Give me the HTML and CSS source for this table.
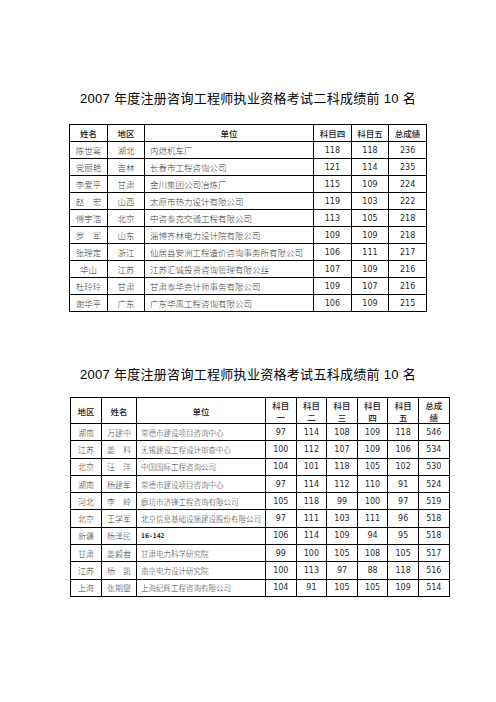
FILE: index.html
```html
<!DOCTYPE html>
<html lang="zh">
<head>
<meta charset="utf-8">
<title>2007 年度注册咨询工程师执业资格考试成绩</title>
<link rel="stylesheet" href="styles.css">
</head>
<body>
<div class="page">
  <h1 class="title">2007 年度注册咨询工程师执业资格考试二科成绩前 10 名</h1>
  <table class="grid t1">
    <colgroup>
      <col class="c-name"><col class="c-area"><col class="c-unit"><col class="c-s"><col class="c-s"><col class="c-s">
    </colgroup>
    <thead>
      <tr><th>姓名</th><th>地区</th><th>单位</th><th>科目四</th><th>科目五</th><th>总成绩</th></tr>
    </thead>
    <tbody>
      <tr><td class="cn">陈世宴</td><td class="cn">湖北</td><td class="unit">内燃机车厂</td><td class="num">118</td><td class="num">118</td><td class="num">236</td></tr>
      <tr><td class="cn">党丽艳</td><td class="cn">吉林</td><td class="unit">长春市工程咨询公司</td><td class="num">121</td><td class="num">114</td><td class="num">235</td></tr>
      <tr><td class="cn">李爱平</td><td class="cn">甘肃</td><td class="unit">金川集团公司冶炼厂</td><td class="num">115</td><td class="num">109</td><td class="num">224</td></tr>
      <tr><td class="cn">赵　宏</td><td class="cn">山西</td><td class="unit">太原市热力设计有限公司</td><td class="num">119</td><td class="num">103</td><td class="num">222</td></tr>
      <tr><td class="cn">傅宇浩</td><td class="cn">北京</td><td class="unit">中咨泰克交通工程有限公司</td><td class="num">113</td><td class="num">105</td><td class="num">218</td></tr>
      <tr><td class="cn">罗　军</td><td class="cn">山东</td><td class="unit">淄博齐林电力设计院有限公司</td><td class="num">109</td><td class="num">109</td><td class="num">218</td></tr>
      <tr><td class="cn">张理定</td><td class="cn">浙江</td><td class="unit">仙居县安洲工程造价咨询事务所有限公司</td><td class="num">106</td><td class="num">111</td><td class="num">217</td></tr>
      <tr><td class="cn">华山</td><td class="cn">江苏</td><td class="unit">江苏汇诚投资咨询管理有限公丝</td><td class="num">107</td><td class="num">109</td><td class="num">216</td></tr>
      <tr><td class="cn">杜玲玲</td><td class="cn">甘肃</td><td class="unit">甘肃泰华会计师事务有限公司</td><td class="num">109</td><td class="num">107</td><td class="num">216</td></tr>
      <tr><td class="cn">谢华平</td><td class="cn">广东</td><td class="unit">广东华禹工程咨询有限公司</td><td class="num">106</td><td class="num">109</td><td class="num">215</td></tr>
    </tbody>
  </table>

  <h1 class="title title2">2007 年度注册咨询工程师执业资格考试五科成绩前 10 名</h1>
  <table class="grid t2">
    <colgroup>
      <col class="d-area"><col class="d-name"><col class="d-unit">
      <col class="d-s"><col class="d-s"><col class="d-s"><col class="d-s"><col class="d-s"><col class="d-s">
    </colgroup>
    <thead>
      <tr><th>地区</th><th>姓名</th><th>单位</th><th>科目<br>一</th><th>科目<br>二</th><th>科目<br>三</th><th>科目<br>四</th><th>科目<br>五</th><th>总成<br>绩</th></tr>
    </thead>
    <tbody>
      <tr><td class="cn">湖南</td><td class="cn">万建中</td><td class="unit">常德市建设项目咨询中心</td><td class="num">97</td><td class="num">114</td><td class="num">108</td><td class="num">109</td><td class="num">118</td><td class="num">546</td></tr>
      <tr><td class="cn">江苏</td><td class="cn">姜　科</td><td class="unit">无锡建设工程设计审查中心</td><td class="num">100</td><td class="num">112</td><td class="num">107</td><td class="num">109</td><td class="num">106</td><td class="num">534</td></tr>
      <tr><td class="cn">北京</td><td class="cn">汪　洋</td><td class="unit">中国国际工程咨询公司</td><td class="num">104</td><td class="num">101</td><td class="num">118</td><td class="num">105</td><td class="num">102</td><td class="num">530</td></tr>
      <tr><td class="cn">湖南</td><td class="cn">杨建军</td><td class="unit">常德市建设项目咨询中心</td><td class="num">97</td><td class="num">114</td><td class="num">112</td><td class="num">110</td><td class="num">91</td><td class="num">524</td></tr>
      <tr><td class="cn">河北</td><td class="cn">李　岭</td><td class="unit">廊坊市济锋工程咨询有限公司</td><td class="num">105</td><td class="num">118</td><td class="num">99</td><td class="num">100</td><td class="num">97</td><td class="num">519</td></tr>
      <tr><td class="cn">北京</td><td class="cn">王学军</td><td class="unit">北京信息基础设施建设股份有限公司</td><td class="num">97</td><td class="num">111</td><td class="num">103</td><td class="num">111</td><td class="num">96</td><td class="num">518</td></tr>
      <tr><td class="cn">新疆</td><td class="cn">杨泽民</td><td class="unit code">16-142</td><td class="num">106</td><td class="num">114</td><td class="num">109</td><td class="num">94</td><td class="num">95</td><td class="num">518</td></tr>
      <tr><td class="cn">甘肃</td><td class="cn">姜毅君</td><td class="unit">甘肃电力科学研究院</td><td class="num">99</td><td class="num">100</td><td class="num">105</td><td class="num">108</td><td class="num">105</td><td class="num">517</td></tr>
      <tr><td class="cn">江苏</td><td class="cn">杨　凯</td><td class="unit">南京电力设计研究院</td><td class="num">100</td><td class="num">113</td><td class="num">97</td><td class="num">88</td><td class="num">118</td><td class="num">516</td></tr>
      <tr><td class="cn">上海</td><td class="cn">张期燮</td><td class="unit">上海纪辉工程咨询有限公司</td><td class="num">104</td><td class="num">91</td><td class="num">105</td><td class="num">105</td><td class="num">109</td><td class="num">514</td></tr>
    </tbody>
  </table>
</div>
</body>
</html>
```

FILE: styles.css
```css
html, body {
  margin: 0;
  padding: 0;
  background: #ffffff;
}

body {
  font-family: "Liberation Sans", "Noto Sans CJK SC", sans-serif;
  color: #111;
}

.page {
  width: 496px;
  padding-top: 89px;
}

.title {
  margin: 0;
  font-size: 13px;
  font-weight: normal;
  letter-spacing: 0.3px;
  line-height: 20px;
  text-align: center;
  color: #000;
}

.title2 {
  margin-top: 53px;
}

.grid {
  border-collapse: collapse;
  table-layout: fixed;
}

.grid th,
.grid td {
  border: 1px solid #000;
  padding: 0;
  vertical-align: middle;
  white-space: nowrap;
  overflow: hidden;
}

.grid th {
  font-family: "Noto Sans CJK SC", sans-serif;
  font-weight: 500;
  font-size: 8.5px;
  color: #222;
  text-align: center;
}

.grid td.cn {
  font-family: "Noto Sans CJK SC", sans-serif;
  font-weight: 300;
  font-size: 8.5px;
  color: #3a3a3a;
  text-align: center;
}

.grid td.unit {
  font-family: "Noto Sans CJK SC", sans-serif;
  font-weight: 300;
  font-size: 8.5px;
  color: #3a3a3a;
  text-align: left;
  padding-left: 5px;
}

.grid td.num {
  font-family: "DejaVu Sans", sans-serif;
  font-size: 8px;
  color: #2a2a2a;
  text-align: center;
}

/* table 1 */
.t1 {
  width: 357px;
  margin: 15px auto 0;
}

.t1 tr {
  height: 17px;
}

.c-name { width: 38px; }
.c-area { width: 37px; }
.c-unit { width: 169px; }
.c-s { width: 37.6px; }

/* table 2 */
.t2 {
  width: 379px;
  margin: 12px 0 0 70px;
}

.t2 thead tr {
  height: 26px;
}

.t2 th {
  line-height: 12px;
}

.t2 tbody tr {
  height: 17.3px;
}

.t2 td.unit {
  font-size: 7.5px;
  padding-left: 4px;
}

.t2 td.cn {
  font-size: 8px;
}

.t2 td.code {
  font-family: "DejaVu Sans Mono", monospace;
  font-weight: bold;
  font-size: 6.5px;
  color: #222;
}

.d-area { width: 31px; }
.d-name { width: 35px; }
.d-unit { width: 129px; }
.d-s { width: 30.6px; }
```
